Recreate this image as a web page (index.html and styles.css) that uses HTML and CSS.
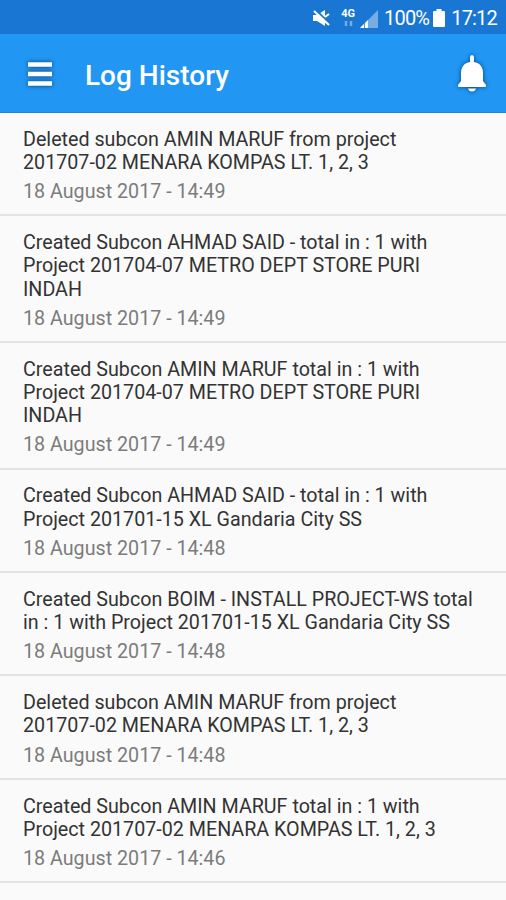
FILE: index.html
```html
<!DOCTYPE html>
<html lang="en">
<head>
    <meta charset="UTF-8">
    <meta name="viewport" content="width=device-width, initial-scale=1.0">
    <title>Log History</title>
    <link rel="stylesheet" href="styles.css">
</head>
<body>
    <!-- Status bar -->
    <div class="status-bar">
        <svg class="icon-mute" width="17" height="18" viewBox="0 0 17 18">
            <path d="M0 6h4l8-5v16l-8-5H0z" fill="#fff"/>
            <path d="M2 0l15 15" stroke="#1976d2" stroke-width="2"/>
            <path d="M1 2l15 14" stroke="#fff" stroke-width="2"/>
            <path d="M12 8l4-3" stroke="#fff" stroke-width="2"/>
        </svg>
        <div class="network">
            <span>4G</span>
            <svg width="9" height="5" viewBox="0 0 9 5">
                <path d="M2 0v5M7 0v5" stroke="#75ade4" stroke-width="2.500"/>
            </svg>
        </div>
        <svg class="icon-signal" width="18" height="18" viewBox="0 0 18 18">
            <path d="M0 18L18 0v18z" fill="#75ade4"/>
            <path d="M0 18l8-8v8z" fill="#fff"/>
            <path d="M4.500 13v5" stroke="#4b92dc"/>
        </svg>
        <span class="percent">100%</span>
        <svg class="icon-battery" width="12" height="18" viewBox="0 0 12 18">
            <path d="M3.500 0h5v2H11q1 0 1 1v14q0 1-1 1H1q-1 0-1-1V3q0-1 1-1h2.500z" fill="#fff"/>
        </svg>
        <span class="clock">17:12</span>
    </div>

    <!-- Toolbar -->
    <div class="toolbar">
        <svg class="icon-menu" width="24" height="24" viewBox="0 0 24 24">
            <path d="M0 2.500h24M0 12h24M0 21.500h24" stroke="#fff" stroke-width="4.500"/>
        </svg>
        <h1>Log History</h1>
        <svg class="icon-bell" width="28" height="37" viewBox="0 0 28 37">
            <path d="M14 0q2 0 2 2.500V7C22 8 25 12 25 18v8l3 4q0.500 2-1 2H1q-1.500 0-1-2l3-4v-8C3 12 6 8 12 7V2.500Q12 0 14 0z" fill="#fff"/>
            <path d="M10 33.500h8q-1 3-4 3t-4-3z" fill="#fff"/>
        </svg>
    </div>

    <!-- Log entries -->
    <div class="log-list">
        <div class="log-item">
            <p>Deleted subcon AMIN MARUF from project<br>201707-02 MENARA KOMPAS LT. 1, 2, 3</p>
            <div class="date">18 August 2017 - 14:49</div>
        </div>
        <div class="log-item">
            <p>Created Subcon AHMAD SAID - total in : 1 with<br>Project 201704-07 METRO DEPT STORE PURI<br>INDAH</p>
            <div class="date">18 August 2017 - 14:49</div>
        </div>
        <div class="log-item">
            <p>Created Subcon AMIN MARUF total in : 1 with<br>Project 201704-07 METRO DEPT STORE PURI<br>INDAH</p>
            <div class="date">18 August 2017 - 14:49</div>
        </div>
        <div class="log-item">
            <p>Created Subcon AHMAD SAID - total in : 1 with<br>Project 201701-15 XL Gandaria City SS</p>
            <div class="date">18 August 2017 - 14:48</div>
        </div>
        <div class="log-item">
            <p>Created Subcon BOIM - INSTALL PROJECT-WS total<br>in : 1 with Project 201701-15 XL Gandaria City SS</p>
            <div class="date">18 August 2017 - 14:48</div>
        </div>
        <div class="log-item">
            <p>Deleted subcon AMIN MARUF from project<br>201707-02 MENARA KOMPAS LT. 1, 2, 3</p>
            <div class="date">18 August 2017 - 14:48</div>
        </div>
        <div class="log-item">
            <p>Created Subcon AMIN MARUF total in : 1 with<br>Project 201707-02 MENARA KOMPAS LT. 1, 2, 3</p>
            <div class="date">18 August 2017 - 14:46</div>
        </div>
    </div>
</body>
</html>
```
FILE: styles.css
```css
body { margin: 0; height: 900px; overflow: hidden; background-color: #fafafa; color: #333; font-family: Roboto, Arial, sans-serif; }

/* Status bar */
.status-bar { display: flex; align-items: center; justify-content: flex-end; height: 34px; box-sizing: border-box; padding: 1px 9px 0 0; background-color: #1976d2; color: #fff; font-size: 20px; letter-spacing: -0.8px; }
.icon-mute { margin-right: 2px; }
.network { display: flex; flex-direction: column; align-items: center; gap: 2px; margin: 0 5px 0 9px; font-size: 11px; font-weight: 700; line-height: 10px; letter-spacing: 0; }
.icon-signal { margin-top: 2px; }
.percent { margin: 0 4px 0 6px; }
.clock { margin-left: 6px; }

/* Toolbar */
.toolbar { display: flex; align-items: center; height: 79px; box-sizing: border-box; padding: 0 20px 0 28px; background-color: #2196f3; border-bottom: 1px solid #1c86dd; color: #fff; }
.toolbar h1 { flex: 1; margin: 5px 0 0 33px; font-size: 28px; font-weight: 500; line-height: 32px; }
.icon-menu, .icon-bell { overflow: visible; filter: drop-shadow(0 0 2px #0b3c70); }
.icon-menu { margin-top: 2px; }

/* Log entries */
.log-item { padding: 14.8px 23px 11px; border-bottom: 2px solid #e3e3e3; font-size: 19.7px; line-height: 23.2px; white-space: nowrap; }
.log-item p { margin: 0 0 6px; }
.date { color: #7c7c7c; }
```
